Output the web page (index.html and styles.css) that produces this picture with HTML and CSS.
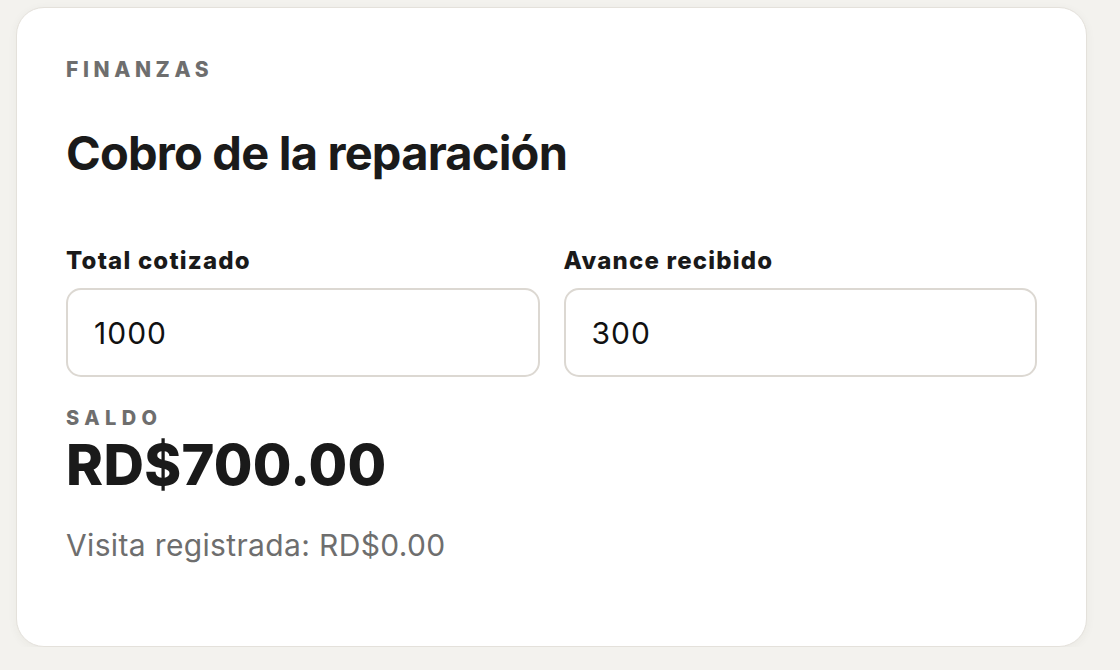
FILE: index.html
```html
<!DOCTYPE html>
<html lang="es">
<head>
    <meta charset="UTF-8">
    <meta name="viewport" content="width=device-width, initial-scale=1.0">
    <title>Cobro de la reparación</title>
    <link rel="stylesheet" href="styles.css">
</head>
<body>
    <section class="card">
        <div class="eyebrow">Finanzas</div>
        <h2 class="title">Cobro de la reparación</h2>

        <div class="fields">
            <label class="field">
                <span class="field-label">Total cotizado</span>
                <input type="text" class="field-input" value="1000">
            </label>
            <label class="field">
                <span class="field-label">Avance recibido</span>
                <input type="text" class="field-input" value="300">
            </label>
        </div>

        <div class="balance">
            <div class="eyebrow small">Saldo</div>
            <div class="amount">RD$700.00</div>
        </div>

        <p class="note">Visita registrada: RD$0.00</p>
    </section>
</body>
</html>
```

FILE: styles.css
```css
*{
    box-sizing: border-box;
}
body{
    margin: 0;
    padding: 7px 0 0 16px;
    background-color: #f3f2ee;
    font-family: Inter, "Liberation Sans", sans-serif;
    color: #1a1a1a;
}

.card{
    width: 1071px;
    height: 640px;
    background-color: #fff;
    border: 1px solid #e4e1db;
    border-radius: 28px;
    padding: 50px 49px;
    box-shadow: 0 2px 10px rgba(60, 50, 30, 0.05);
}

.eyebrow{
    font-size: 21px;
    line-height: 24px;
    font-weight: 800;
    letter-spacing: 4.6px;
    text-transform: uppercase;
    color: #6e6e6e;
}
.eyebrow.small{
    font-size: 20px;
    letter-spacing: 5.4px;
}

.title{
    margin: 43px 0 0;
    font-size: 47px;
    line-height: 56px;
    font-weight: 700;
    letter-spacing: -0.8px;
    color: #1a1a1a;
}

.fields{
    display: grid;
    grid-template-columns: 1fr 1fr;
    gap: 24px;
    margin-top: 67px;
}
.field{
    display: flex;
    flex-direction: column;
    gap: 14px;
}
.field-label{
    font-size: 24px;
    line-height: 26px;
    font-weight: 800;
    letter-spacing: 1.2px;
    color: #1a1a1a;
}
.field-input{
    height: 89px;
    width: 100%;
    border: 2px solid #dcd8d2;
    border-radius: 15px;
    padding: 0 26px;
    font-family: inherit;
    font-size: 30px;
    letter-spacing: 1px;
    color: #111;
    background: #fff;
    outline: none;
}

.balance{
    margin-top: 29px;
}
.amount{
    margin-top: 3px;
    font-size: 56px;
    line-height: 64px;
    font-weight: 800;
    letter-spacing: 0.3px;
    color: #1a1a1a;
}

.note{
    margin: 30px 0 0;
    font-size: 30px;
    line-height: 36px;
    letter-spacing: 0.35px;
    color: #6e6e6e;
}
```
